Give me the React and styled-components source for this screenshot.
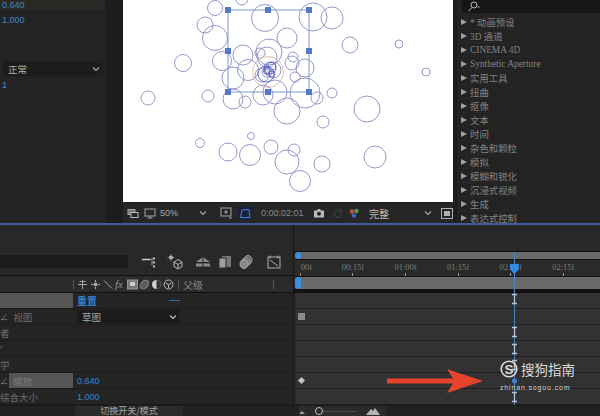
import React from 'react';
import styled, { createGlobalStyle } from 'styled-components';

const CN = `"Noto Sans CJK SC", "Liberation Sans", sans-serif`;
const SERIF = `"Liberation Serif", "Noto Sans CJK SC", serif`;

const Global = createGlobalStyle`
  html, body { margin: 0; padding: 0; background: #232323; overflow: hidden; }
`;

const Page = styled.div`
  width: 600px;
  height: 416px;
  display: flex;
  flex-direction: column;
  overflow: hidden;
  background: #232323;
  font-family: ${CN};
`;

const TopArea = styled.div`
  height: 223px;
  display: flex;
  background: #1d1d1d;
  flex-shrink: 0;
`;

const BlueRule = styled.div`
  height: 2px;
  background: #3d5c9c;
  flex-shrink: 0;
`;

/* left panel */
const LeftPanel = styled.div`
  width: 106px;
  margin-right: 17px;
  background: #232323;
  border-right: 1px solid #1f1f1f;
  box-sizing: border-box;
  display: flex;
  flex-direction: column;
`;

const ValueRow = styled.div`
  height: ${p => p.$h || 16}px;
  padding: ${p => p.$pt || 0}px 0 0 2px;
  font-size: 9px;
  font-family: "Liberation Sans", sans-serif;
  color: #3f88c8;
  display: flex;
  align-items: center;
  background: ${p => (p.$warm ? '#2a2825' : 'transparent')};
  border-bottom: 1px solid #292929;
  box-sizing: border-box;
`;

const PanelSelect = styled.div`
  height: 15px;
  margin: 34px 2px 2px 3px;
  background: #1c1c1c;
  color: #b4b4b4;
  font-size: 9.5px;
  padding: 0 3px 0 5px;
  display: flex;
  align-items: center;
  justify-content: space-between;
`;

/* viewer */
const Viewer = styled.div`
  width: 330px;
  display: flex;
  flex-direction: column;
`;

const Comp = styled.svg`
  display: block;
  width: 330px;
  height: 202px;
  background: #fff;
`;

const ViewerBar = styled.div`
  flex: 1;
  margin-top: 1px;
  background: #262626;
  display: flex;
  align-items: center;
  padding-left: 4px;
  color: #a8a8a8;
  font-size: 9px;
`;

const BarText = styled.span`
  margin: ${p => p.$m || '0'};
  width: ${p => p.$w || 'auto'};
  color: ${p => p.$c || '#a8a8a8'};
  font-family: ${p => (p.$latin ? '"Liberation Sans", sans-serif' : CN)};
  font-size: ${p => p.$s || 9}px;
  flex-shrink: 0;
`;

const FxLabel = styled.span`
  width: 10px;
  margin-right: 2px;
  flex-shrink: 0;
  color: #9a9a9a;
  font-family: "Liberation Serif", serif;
  font-style: italic;
  font-size: 11px;
`;

const MaskToggle = styled.span`
  width: 15px;
  height: 14px;
  margin-left: 5px;
  background: #17233c;
  display: flex;
  align-items: center;
  justify-content: center;
`;

const Glyph = styled.svg`
  display: block;
  flex-shrink: 0;
  margin: ${p => p.$m || '0'};
`;

/* effects list */
const EffectsPanel = styled.div`
  flex: 1;
  margin-left: 4px;
  background: #232323;
  overflow: hidden;
`;

const SearchBox = styled.div`
  height: 13px;
  margin: 0 0 2px 5px;
  background: #161616;
  display: flex;
  align-items: center;
  padding-left: 5px;
`;

const EffectRow = styled.div`
  height: 14px;
  display: flex;
  align-items: center;
  padding-left: 4px;
  gap: 3px;
  border-bottom: 1px solid #272727;
  box-sizing: border-box;
  font-family: ${SERIF};
  font-size: 9.4px;
  color: #838383;
  white-space: nowrap;
`;

const Tri = styled.span`
  width: 0;
  height: 0;
  border-left: 6px solid #a0a0a0;
  border-top: 3px solid transparent;
  border-bottom: 3px solid transparent;
`;

/* timeline */
const Timeline = styled.div`
  flex: 1;
  min-height: 0;
  background: #282828;
  display: flex;
  flex-direction: column;
`;

const TimelineBody = styled.div`
  height: 180px;
  display: flex;
  flex-shrink: 0;
`;

const LayerSide = styled.div`
  width: 293px;
  flex-shrink: 0;
  display: flex;
  flex-direction: column;
`;

const ToolRow = styled.div`
  height: 51px;
  box-sizing: border-box;
  padding-top: 30px;
  display: flex;
  align-items: flex-start;
  border-bottom: 1px solid #121212;
`;

const LayerSearch = styled.div`
  width: 128px;
  height: 13px;
  background: #1b1b1b;
  margin-right: 13px;
`;

const ToolIcons = styled.div`
  display: flex;
  align-items: center;
  margin-top: -1px;
`;

const ColumnHead = styled.div`
  height: 17px;
  box-sizing: border-box;
  background: #2b2b2b;
  border-bottom: 1px solid #111;
  display: flex;
  align-items: center;
  position: relative;
  color: #8a8a8a;
  font-size: 10px;
`;

const HeadSep = styled.span`
  width: 1px;
  height: 9px;
  background: #555;
  margin: ${p => p.$m};
  flex-shrink: 0;
`;

const LayerRow = styled.div`
  height: 16px;
  box-sizing: border-box;
  border-bottom: 1px solid #1b1b1b;
  display: flex;
  align-items: center;
  font-size: 9.5px;
  color: #6e6e6e;
  background: #242424;
`;

const LabelCell = styled.div`
  width: 73px;
  height: 100%;
  flex-shrink: 0;
  display: flex;
  align-items: center;
  white-space: nowrap;
  overflow: hidden;
`;

const Tick = styled.span`
  width: 9px;
  flex-shrink: 0;
  color: #8a8a8a;
  font-size: 8px;
  line-height: 1;
`;

const Badge = styled.div`
  flex: 1;
  height: 100%;
  background: #555;
  color: #7c7c7c;
  display: flex;
  align-items: center;
  padding-left: 2px;
`;

const BlueValue = styled.span`
  margin-left: 4px;
  color: #2f84d6;
  font-size: ${p => p.$s || 9}px;
  font-weight: ${p => (p.$bold ? 700 : 400)};
  font-family: ${p => (p.$bold ? CN : '"Liberation Sans", sans-serif')};
`;

const Dash = styled.span`
  margin-left: 72px;
  width: 11px;
  height: 1px;
  background: #3a6ea8;
`;

const RowSelect = styled.div`
  margin-left: 5px;
  width: 101px;
  height: 13px;
  background: #1b1b1b;
  color: #a8a8a8;
  font-size: 9.5px;
  padding: 0 2px 0 4px;
  box-sizing: border-box;
  display: flex;
  align-items: center;
  justify-content: space-between;
`;

const TrackSide = styled.div`
  flex: 1;
  position: relative;
  border-left: 1px solid #161616;
  overflow: hidden;
  display: flex;
  flex-direction: column;
`;

const NavGap = styled.div`
  height: 26px;
  flex-shrink: 0;
  border-bottom: 1px solid #111;
`;

const GreyBar = styled.div`
  height: ${p => p.$h}px;
  margin-left: 3px;
  background: #6a6a6a;
  flex-shrink: 0;
`;

const Ruler = styled.div`
  height: 18px;
  margin-left: 2px;
  background: #2a2a2a;
  border-top: 1px solid #111;
  border-bottom: 1px solid #111;
  box-sizing: border-box;
  display: flex;
  overflow: hidden;
  flex-shrink: 0;
`;

const RulerInner = styled.div`
  display: flex;
  margin-left: -22px;
`;

const RulerMark = styled.div`
  width: 52.6px;
  flex-shrink: 0;
  height: 100%;
  display: flex;
  flex-direction: column;
  align-items: center;
  justify-content: flex-end;
  font-family: "Liberation Serif", serif;
  font-size: 8.5px;
  line-height: 9px;
  color: #7d7d7d;
  &::after {
    content: '';
    width: 1px;
    height: 3px;
    margin-top: 1px;
    background: ${p => (p.$first ? '#b08a50' : '#a0a0a0')};
  }
`;

const RulerText = styled.span`
  margin-left: ${p => (p.$first ? 12 : 0)}px;
`;

const WorkGap = styled.div`
  height: 4px;
  background: #131313;
  flex-shrink: 0;
`;

const TrackRow = styled.div`
  height: 16px;
  flex-shrink: 0;
  margin-left: 2px;
  box-sizing: border-box;
  background: #323232;
  border-bottom: 1px solid #1f1f1f;
  display: flex;
  align-items: center;
  padding-left: 2px;
`;

const Key = styled.span`
  width: ${p => (p.$diamond ? 5 : 7)}px;
  height: ${p => (p.$diamond ? 5 : 7)}px;
  background: ${p => (p.$diamond ? '#c4c4c4' : '#8a8a8a')};
  transform: ${p => (p.$diamond ? 'rotate(45deg)' : 'none')};
  margin-left: ${p => (p.$diamond ? 1 : 0)}px;
`;

const Knob = styled.span`
  position: absolute;
  left: 1px;
  top: ${p => p.$top}px;
  width: 6px;
  height: ${p => p.$h}px;
  border-radius: 3px;
  background: #3d8fe6;
`;

const PlayLine = styled.div`
  position: absolute;
  left: 220px;
  top: 27px;
  bottom: 0;
  width: 1px;
  background: #4a86cc;
`;

const PlayCap = styled.svg`
  position: absolute;
  left: 215px;
  top: 39px;
`;

const PlayMarks = styled.svg`
  position: absolute;
  left: 215px;
  top: 68px;
`;

const Arrow = styled.svg`
  position: absolute;
  left: 93px;
  top: 144px;
`;

const Watermark = styled.div`
  position: absolute;
  left: 206px;
  top: 135px;
  width: 78px;
  color: #dcdcdc;
`;

const WaterTop = styled.div`
  display: flex;
  align-items: center;
  gap: 3px;
  font-size: 13.5px;
  line-height: 18px;
`;

const WaterUrl = styled.div`
  font-family: "Liberation Sans", sans-serif;
  font-size: 7px;
  letter-spacing: 0.85px;
  line-height: 9px;
  margin-top: 5px;
  white-space: nowrap;
`;

/* footer */
const Footer = styled.div`
  flex: 1;
  min-height: 0;
  background: #212121;
  display: flex;
  align-items: center;
  border-top: 1px solid #1a1a1a;
`;

const ModeButton = styled.div`
  width: 108px;
  height: 100%;
  margin-left: 75px;
  background: #2b2b2b;
  color: #a4a4a4;
  font-size: 9px;
  line-height: 10px;
  display: flex;
  align-items: center;
  justify-content: center;
`;

const ZoomSlider = styled.div`
  display: flex;
  align-items: center;
  margin-left: 116px;
  padding-right: 6px;
  height: 100%;
  background: #2b2b2b;
`;

const SliderTrack = styled.span`
  width: 33px;
  height: 1px;
  background: #4a4a4a;
`;

const SliderThumb = styled.span`
  width: 6px;
  height: 6px;
  border: 1px solid #bcbcbc;
  border-radius: 50%;
`;

const circles = [
  [215, 8, 7.5], [242, -1, 6], [265, 18, 13.5], [205, 25, 8], [215, 38, 12.5], [287, 38, 10],
  [243, 55, 10], [269, 52, 13], [222, 61, 9.5], [183, 63, 8.5], [248, 70, 10.5], [233, 78, 11],
  [148, 98, 7], [208, 96, 6], [233, 99, 10], [245, 102, 6], [263, 95, 10], [275, 92, 12],
  [287, 111, 13], [251, 136, 3.5], [200, 143, 4.5], [228, 152, 9], [250, 155, 10.5], [271, 147, 7],
  [294, 150, 6], [287, 162, 12], [300, 181, 10.5], [313, 17, 14], [332, 18, 11], [350, 45, 8],
  [399, 44, 4], [426, 72, 4], [305, 68, 9], [305, 93, 15], [317, 98, 6], [332, 93, 5], [367, 109, 13],
  [323, 122, 6], [375, 157, 11], [322, 164, 8], [293, 57, 5], [292, 63, 7], [295, 77, 5], [260, 53, 5],
  [267, 57, 10], [273, 70, 8], [267, 72, 5], [267, 71, 2.5], [272, 66, 4], [262, 75, 7],
];

const inner = [[267, 71, 3.5], [270, 68, 6], [266, 74, 8], [272, 74, 3]];

const handles = [[228, 10], [268, 10], [309, 10], [228, 51], [309, 51], [228, 92], [268, 92], [309, 92]];

const effects = ['* 动画预设', '3D 通道', 'CINEMA 4D', 'Synthetic Aperture', '实用工具', '扭曲', '抠像', '文本', '时间', '杂色和颗粒', '模拟', '模糊和锐化', '沉浸式视频', '生成', '表达式控制'];

const marks = ['00f', '00:15f', '01:00f', '01:15f', '02:00f', '02:15f'];

const Chevron = ({ c = '#a8a8a8', m }) => (
  <Glyph $m={m} width="8" height="6" viewBox="0 0 8 6">
    <path d="M1 1.5 4 4.5 7 1.5" fill="none" stroke={c} strokeWidth="1.2" />
  </Glyph>
);

const Icon = ({ w = 14, h = 14, m, children }) => (
  <Glyph $m={m} width={w} height={h} viewBox={`0 0 ${w} ${h}`} fill="none" stroke="#a4a4a4" strokeWidth="1">
    {children}
  </Glyph>
);

const App = () => (
  <Page>
    <Global />
    <TopArea>
      <LeftPanel>
        <ValueRow $h={10} $warm>0.640</ValueRow>
        <ValueRow $h={17} $pt={3}>1.000</ValueRow>
        <PanelSelect>正常<Chevron /></PanelSelect>
        <ValueRow $h={15}>1</ValueRow>
      </LeftPanel>

      <Viewer>
        <Comp viewBox="123 0 330 202">
          {circles.map(([cx, cy, r], i) => (
            <circle key={i} cx={cx} cy={cy} r={r} fill="none" stroke="#8a8cc4" strokeWidth="0.9" />
          ))}
          {inner.map(([cx, cy, r], i) => (
            <circle key={i} cx={cx} cy={cy} r={r} fill="none" stroke="#4a50c0" strokeWidth="0.8" />
          ))}
          <circle cx="268" cy="72" r="15.5" fill="none" stroke="#d8b09a" strokeWidth="0.8" />
          <rect x="228" y="10" width="81" height="82" fill="none" stroke="#7f97cf" strokeWidth="1" />
          {handles.map(([x, y]) => (
            <rect key={`${x}-${y}`} x={x - 3} y={y - 3} width="6" height="6" fill="#5578c8" />
          ))}
        </Comp>
        <ViewerBar>
          <Icon w={12} h={11} m="0 5px 0 0">
            <rect x="1" y="1.5" width="7" height="5" fill="#777" />
            <rect x="4" y="4.5" width="7" height="5" fill="#262626" stroke="#bbb" />
          </Icon>
          <Icon w={12} h={11} m="0 4px 0 0">
            <rect x="1" y="1" width="10" height="7" />
            <path d="M6 8v2M3.5 10h5" />
          </Icon>
          <BarText $latin $s={9} $w="39px">50%</BarText>
          <Chevron m="0 7px 0 0" />
          <Icon w={13} h={12} m="0 0 0 6px">
            <rect x="1" y="1" width="10" height="8" />
            <path d="M6 3v4M4 5h4M9 11h3" />
          </Icon>
          <MaskToggle>
            <Icon w={12} h={11}>
              <path d="M3 2 10 1.500 11 9.500 1.500 9.500Z" stroke="#4d82d6" />
            </Icon>
          </MaskToggle>
          <BarText $latin $s={9} $c="#8c8c8c" $m="0 0 0 9px" $w="46px">0:00:02:01</BarText>
          <Icon w={12} h={10} m="0 0 0 6px">
            <path d="M1 2.500h3l1-1.500h2l1 1.500h3v7H1Z" fill="#b8b8b8" stroke="none" />
            <circle cx="6" cy="5.800" r="2" fill="#262626" stroke="none" />
          </Icon>
          <Icon w={12} h={11} m="0 0 0 7px">
            <circle cx="6" cy="6" r="3.500" stroke="#444" />
            <path d="M8 1l3 2" stroke="#444" />
          </Icon>
          <Icon w={11} h={11} m="0 0 0 5px">
            <circle cx="3" cy="3.500" r="2.200" fill="#c94b3c" stroke="none" />
            <circle cx="7.500" cy="3" r="2.200" fill="#4f9a54" stroke="none" />
            <circle cx="5" cy="7.500" r="2.200" fill="#3f63c2" stroke="none" />
          </Icon>
          <BarText $m="0 0 0 9px" $s={10} $c="#c0c0c0" $w="55px">完整</BarText>
          <Chevron />
          <Icon w={12} h={11} m="0 0 0 9px">
            <rect x="0.500" y="0.500" width="11" height="10" stroke="#b0b0b0" />
            <rect x="3" y="3" width="6" height="5" fill="#b0b0b0" stroke="none" />
          </Icon>
        </ViewerBar>
      </Viewer>

      <EffectsPanel>
        <SearchBox>
          <Icon w={13} h={11}>
            <circle cx="7" cy="4" r="3" stroke="#bcbcbc" />
            <path d="M5 6.500 1.500 10M10.500 6h2" stroke="#bcbcbc" />
          </Icon>
        </SearchBox>
        {effects.map(name => (
          <EffectRow key={name}><Tri />{name}</EffectRow>
        ))}
      </EffectsPanel>
    </TopArea>
    <BlueRule />

    <Timeline>
      <TimelineBody>
        <LayerSide>
          <ToolRow>
            <LayerSearch />
            <ToolIcons>
              <Icon w={16} h={16} m="0 10px 0 0">
                <path d="M1 5.500h8" stroke="#d0d0d0" strokeWidth="1.500" />
                <path d="M9 5.500l3-1M11 6v5" stroke="#a8a8a8" />
                <rect x="12" y="3.500" width="2" height="2" fill="#c0c0c0" stroke="none" />
                <rect x="12" y="7.500" width="2" height="2" fill="#c0c0c0" stroke="none" />
                <rect x="12" y="11.500" width="2" height="2" fill="#c0c0c0" stroke="none" />
              </Icon>
              <Icon w={16} h={16} m="0 12px 0 0">
                <path d="M7 8l4-2.500L15 8v4.500L11 15l-4-2.500ZM7 8l4 2.500L15 8M11 10.500V15" stroke="#b8b8b8" />
                <circle cx="4" cy="3.500" r="2" fill="#c4c4c4" stroke="none" />
                <path d="M4 0v7M0.500 3.500h7" stroke="#a0a0a0" strokeWidth="0.700" />
              </Icon>
              <Icon w={16} h={16} m="0 7px 0 0">
                <path d="M1 8 8 3l7 5ZM1 9.500h14v3H1Z" fill="#8a8a8a" stroke="none" />
                <path d="M8 3v10" stroke="#282828" />
              </Icon>
              <Icon w={14} h={16} m="0 7px 0 0">
                <rect x="4" y="2" width="9" height="11" fill="#777" stroke="none" />
                <rect x="1" y="4" width="7" height="10" fill="#a0a0a0" stroke="#282828" />
              </Icon>
              <Icon w={14} h={16} m="0 14px 0 0">
                <ellipse cx="9" cy="6" rx="4" ry="4.500" fill="#666" stroke="#999" />
                <ellipse cx="7" cy="8" rx="4" ry="4.500" fill="#777" stroke="#999" />
                <ellipse cx="5" cy="10" rx="4" ry="4.500" fill="#888" stroke="#aaa" />
              </Icon>
              <Icon w={14} h={16}>
                <rect x="1" y="3" width="12" height="11" stroke="#b0b0b0" />
                <path d="M3 1.500v3M11 1.500v3M3 6l8 6" stroke="#b0b0b0" />
              </Icon>
            </ToolIcons>
          </ToolRow>
          <ColumnHead>
            <HeadSep $m="0 3px 0 73px" />
            <Icon w={11} h={11} m="0 2px 0 0">
              <path d="M1 5.500h9M5.500 1v9M2.500 2.500h6" stroke="#a8a8a8" />
            </Icon>
            <Icon w={11} h={11} m="0 2px 0 0">
              <circle cx="5.500" cy="5.500" r="2" fill="#a8a8a8" stroke="none" />
              <path d="M5.500 1v2M5.500 8v2M1 5.500h2M8 5.500h2" stroke="#a8a8a8" />
            </Icon>
            <Icon w={10} h={11} m="0 2px 0 0">
              <path d="M1 1.500 9 9.500" stroke="#a8a8a8" />
            </Icon>
            <FxLabel>fx</FxLabel>
            <Icon w={11} h={11} m="0 1px 0 0">
              <rect x="0.500" y="1" width="10" height="9" fill="#777" stroke="#999" />
              <rect x="3" y="3" width="5" height="4" fill="#ccc" stroke="none" />
            </Icon>
            <Icon w={11} h={11} m="0 1px 0 0">
              <ellipse cx="5.500" cy="5.500" rx="5" ry="3.500" transform="rotate(-45 5.500 5.500)" fill="#5c5c5c" stroke="#8a8a8a" />
            </Icon>
            <Icon w={11} h={11} m="0 1px 0 0">
              <circle cx="5.500" cy="5.500" r="4.500" fill="#d0d0d0" stroke="none" />
              <path d="M5.500 1a4.500 4.500 0 0 1 0 9Z" fill="#333" stroke="none" />
            </Icon>
            <Icon w={11} h={11}>
              <circle cx="5.500" cy="5.500" r="4.500" stroke="#b8b8b8" />
              <path d="M2.500 4l3 1.500 3-1.500M5.500 5.500v3.500" stroke="#b8b8b8" />
            </Icon>
            <HeadSep $m="0 4px 0 4px" />
            父级
            <HeadSep $m="0 0 0 70px" />
          </ColumnHead>
          <LayerRow>
            <LabelCell><Badge /></LabelCell>
            <BlueValue $bold $s={10}>重置</BlueValue>
            <Dash />
          </LayerRow>
          <LayerRow>
            <LabelCell><Tick>∠</Tick>&nbsp;&nbsp;视图</LabelCell>
            <RowSelect>草图<Chevron c="#c0c0c0" /></RowSelect>
          </LayerRow>
          <LayerRow><LabelCell>者</LabelCell></LayerRow>
          <LayerRow><LabelCell>'</LabelCell></LayerRow>
          <LayerRow><LabelCell>学</LabelCell></LayerRow>
          <LayerRow>
            <LabelCell><Tick>∠</Tick><Badge>&nbsp;缩放</Badge></LabelCell>
            <BlueValue>0.640</BlueValue>
          </LayerRow>
          <LayerRow>
            <LabelCell>综合大小</LabelCell>
            <BlueValue>1.000</BlueValue>
          </LayerRow>
        </LayerSide>

        <TrackSide>
          <NavGap />
          <GreyBar $h={7} />
          <Ruler>
            <RulerInner>
              {marks.map((m, i) => (
                <RulerMark key={m} $first={i === 0}><RulerText $first={i === 0}>{m}</RulerText></RulerMark>
              ))}
            </RulerInner>
          </Ruler>
          <GreyBar $h={12} />
          <WorkGap />
          <TrackRow />
          <TrackRow><Key /></TrackRow>
          <TrackRow />
          <TrackRow />
          <TrackRow />
          <TrackRow><Key $diamond /></TrackRow>
          <TrackRow />

          <Knob $top={27} $h={7} />
          <Knob $top={52} $h={12} />
          <PlayLine />
          <PlayCap width="11" height="11" viewBox="0 0 11 11">
            <path d="M1 0h9v5L5.500 10.500 1 5Z" fill="#2f8be6" />
          </PlayCap>
          <PlayMarks width="11" height="112" viewBox="0 0 11 112" fill="none" stroke="#b6c4d6" strokeWidth="1.300">
            {[6, 39, 56, 72, 104].map(y => (
              <path key={y} d={`M5.500 ${y - 4.500}v9M3 ${y - 4.500}h5M3 ${y + 4.500}h5`} />
            ))}
            <circle cx="5.500" cy="88" r="2.500" fill="#3d80d8" stroke="none" />
          </PlayMarks>
          <Arrow width="96" height="24" viewBox="0 0 96 24">
            <path d="M0 9.500h66L60 0l36 12-36 12 6-9.500H0Z" fill="#e5432b" />
          </Arrow>
          <Watermark>
            <WaterTop>
              <Glyph width="18" height="18" viewBox="0 0 18 18">
                <circle cx="9" cy="9" r="7.800" fill="none" stroke="#dcdcdc" strokeWidth="1.600" />
                <text x="9" y="13.500" fontSize="13.500" fontWeight="700" textAnchor="middle" fill="#dcdcdc" fontFamily="Liberation Sans">S</text>
              </Glyph>
              搜狗指南
            </WaterTop>
            <WaterUrl>zhinan.sogou.com</WaterUrl>
          </Watermark>
        </TrackSide>
      </TimelineBody>

      <Footer>
        <ModeButton>切换开关/模式</ModeButton>
        <ZoomSlider>
          <Icon w={6} h={8} m="0 10px 0 0">
            <path d="M0 7 3 4 6 7Z" fill="#a0a0a0" stroke="none" />
          </Icon>
          <SliderThumb />
          <SliderTrack />
          <Icon w={14} h={8} m="0 0 0 10px">
            <path d="M0 8 5 2 7 4 9 1 14 8Z" fill="#b4b4b4" stroke="none" />
          </Icon>
        </ZoomSlider>
      </Footer>
    </Timeline>
  </Page>
);

export default App;
